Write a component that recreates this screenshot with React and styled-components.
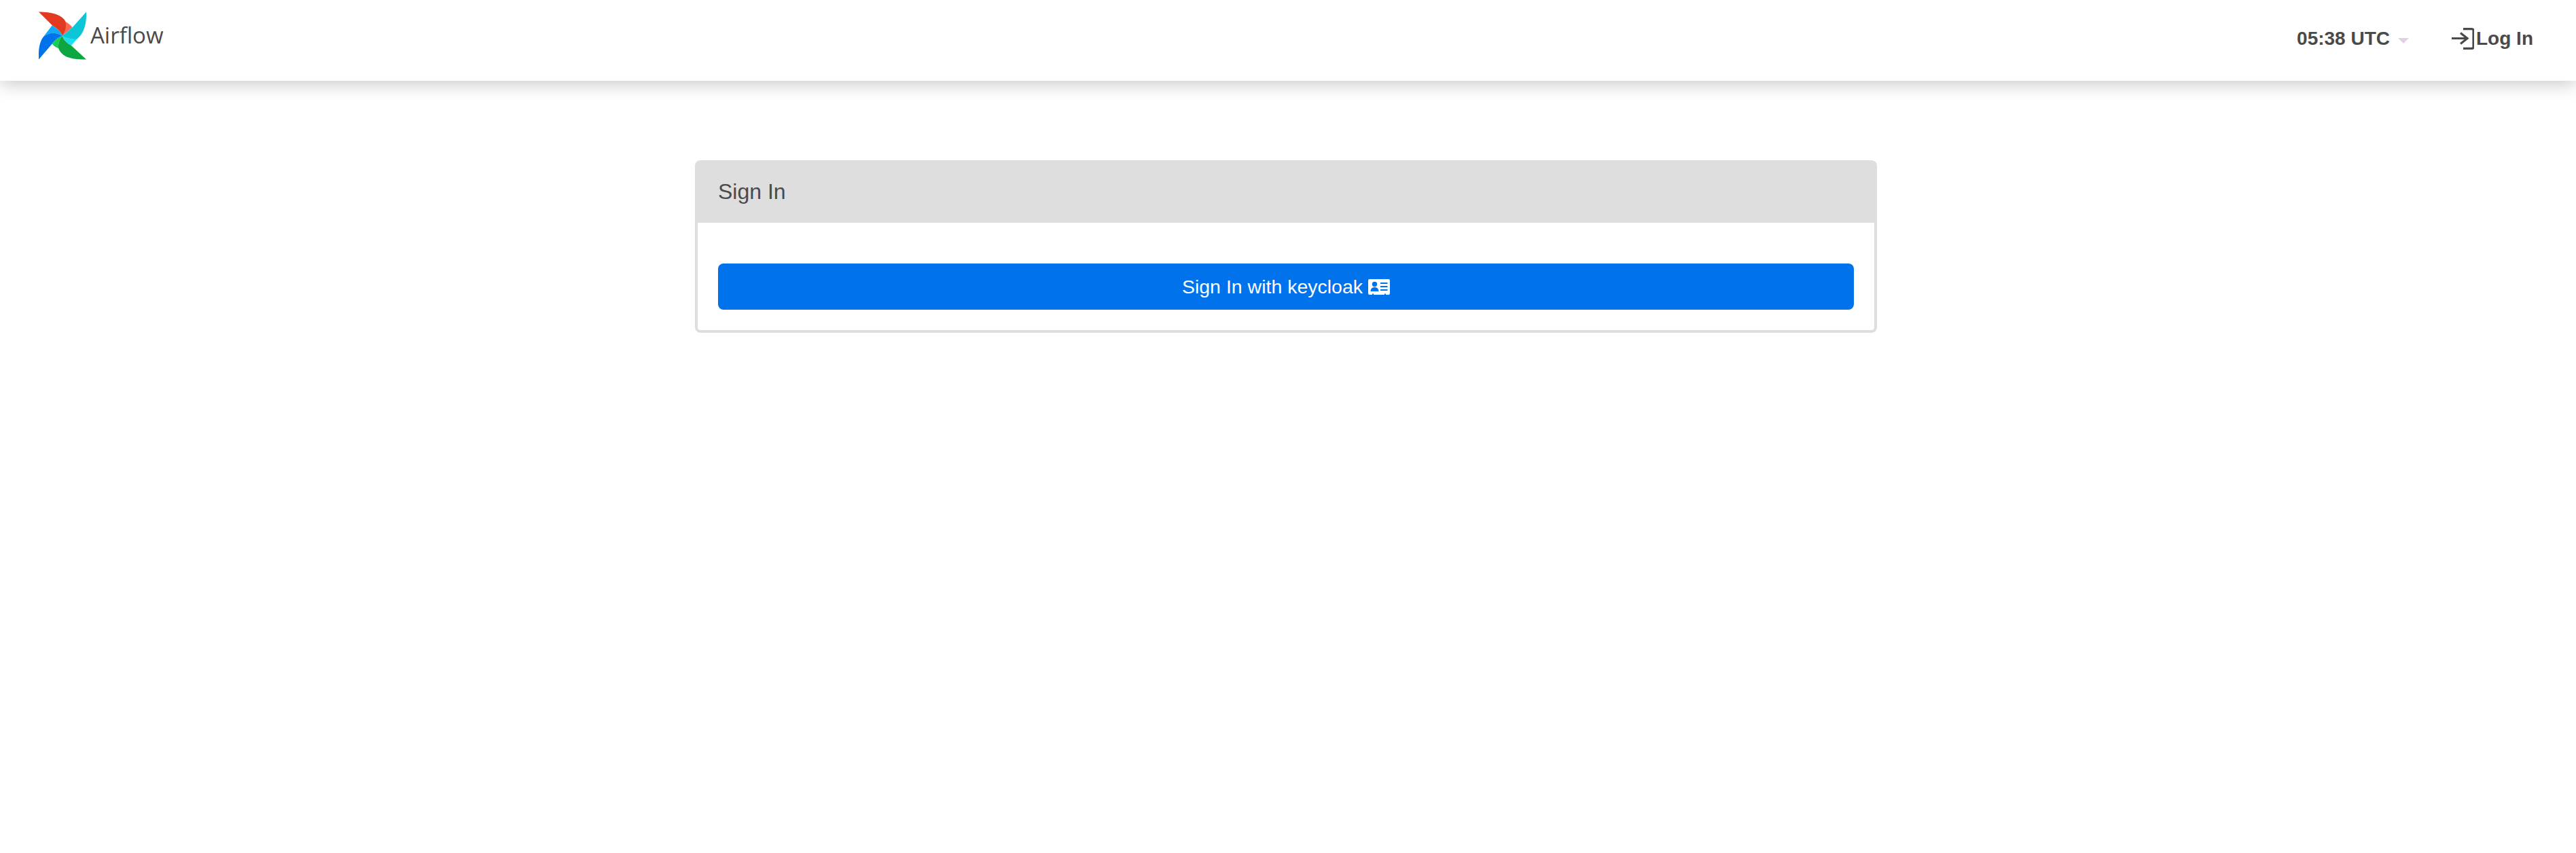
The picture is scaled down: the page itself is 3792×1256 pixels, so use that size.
import React from 'react';
import styled, { createGlobalStyle } from 'styled-components';

const GlobalStyle = createGlobalStyle`
  html, body {
    margin: 0;
    padding: 0;
    background: #fff;
    font-family: "Liberation Sans", Arial, sans-serif;
    color: #4a4a4a;
  }
`;

const Page = styled.div`
  min-height: 1256px;
  background: #fff;
`;

const Navbar = styled.nav`
  height: 119px;
  box-sizing: border-box;
  display: flex;
  align-items: center;
  justify-content: space-between;
  padding: 0 63px 0 57px;
  background: #fff;
  box-shadow: 0 6px 24px rgba(0, 0, 0, 0.2);
`;

const Brand = styled.a`
  display: flex;
  align-items: center;
  gap: 6px;
  margin-top: -15px;
  text-decoration: none;
`;

const BrandName = styled.span`
  font-family: "Open Sans", sans-serif;
  font-size: 33px;
  line-height: 44px;
  color: #4a4a4a;
`;

const NavRight = styled.div`
  display: flex;
  align-items: center;
  margin-top: -6px;
`;

const Clock = styled.button`
  display: flex;
  align-items: center;
  gap: 12px;
  padding: 0;
  border: 0;
  background: none;
  font: bold 28px "Liberation Sans", Arial, sans-serif;
  color: #4a4a4a;
`;

const Caret = styled.span`
  width: 0;
  height: 0;
  margin-top: 6px;
  border-left: 8px solid transparent;
  border-right: 8px solid transparent;
  border-top: 8px solid #e0d1e2;
`;

const LoginLink = styled.a`
  display: flex;
  align-items: center;
  gap: 3px;
  margin-left: 63px;
  font-size: 28px;
  font-weight: bold;
  color: #4a4a4a;
`;

const Main = styled.main`
  display: flex;
  justify-content: center;
  padding: 117px 6px 0 0;
`;

const Panel = styled.section`
  width: 1740px;
  box-sizing: border-box;
  border: 4px solid #dedede;
  border-radius: 8px;
  background: #fff;
`;

const PanelHeading = styled.h3`
  margin: 0;
  height: 88px;
  box-sizing: border-box;
  padding: 0 30px 3px;
  display: flex;
  align-items: center;
  background: #dedede;
  font-size: 32px;
  font-weight: normal;
  color: #4a4a4a;
`;

const PanelBody = styled.div`
  padding: 60px 30px 30px;
`;

const SignInButton = styled.button`
  width: 100%;
  height: 68px;
  display: flex;
  align-items: center;
  justify-content: center;
  gap: 8px;
  border: 0;
  border-radius: 8px;
  background: #0073ec;
  color: #fff;
  font: 28.500px "Liberation Sans", Arial, sans-serif;
`;

const PinLogo = () => (
  <svg width="70" height="71" viewBox="20 18 212 212" aria-hidden="true">
    <path fill="#ff6b50" d="M140 62C152 68 164 78 170 88L125 125Z" />
    <path fill="#e43921" d="M20 18C75 18 125 30 140 62C144 85 138 108 125 125C120 105 100 92 80 78Z" />
    <path fill="#19e1f2" d="M125 125C145 135 170 142 190 140L165 168C148 160 132 145 125 125Z" />
    <path fill="#0cc5d6" d="M232 18C234 70 222 115 190 140C168 142 145 137 125 125L170 88Z" />
    <path fill="#14cf56" d="M125 125C112 140 106 160 108 180C96 176 87 170 80 160C90 146 106 132 125 125Z" />
    <path fill="#0da741" d="M232 230C175 230 125 225 108 180C106 160 112 140 125 125C132 145 148 160 165 168Z" />
    <path fill="#11a8fb" d="M42 128L80 78C100 92 120 105 125 125C105 112 70 105 42 128Z" />
    <path fill="#0073ec" d="M20 230C18 185 24 150 42 128C70 105 105 112 125 125C106 132 90 146 80 160Z" />
  </svg>
);

const LoginIcon = () => (
  <svg width="33" height="32" viewBox="0 0 33 32" fill="none" stroke="#4a4a4a" strokeWidth="3.2" aria-hidden="true">
    <path d="M17 1.600h12.500a2.500 2.500 0 0 1 2.500 2.500v23.800a2.500 2.500 0 0 1-2.500 2.500H17" />
    <path d="M0 15.500h23M13 7.500l10 8-10 8" />
  </svg>
);

const IdCardIcon = () => (
  <svg width="32" height="23" viewBox="0 0 32 23" aria-hidden="true">
    <path
      fill="#fff"
      d="M2 0h28a2 2 0 0 1 2 2v19a2 2 0 0 1-2 2h-4v-1.500h-2V23H8v-1.500H6V23H2a2 2 0 0 1-2-2V2a2 2 0 0 1 2-2Z"
    />
    <circle cx="9.500" cy="7.500" r="3.700" fill="#0073ec" />
    <path fill="#0073ec" d="M3.500 18c0-4 2.500-6 6-6s6 2 6 6Z" />
    <path fill="#0073ec" d="M18 5h10.500v2H18zM18 10h10.500v2H18zM18 15h10.500v2H18z" />
  </svg>
);

function App() {
  return (
    <Page>
      <GlobalStyle />
      <Navbar>
        <Brand>
          <PinLogo />
          <BrandName>Airflow</BrandName>
        </Brand>
        <NavRight>
          <Clock>
            05:38 UTC
            <Caret />
          </Clock>
          <LoginLink>
            <LoginIcon />
            Log In
          </LoginLink>
        </NavRight>
      </Navbar>
      <Main>
        <Panel>
          <PanelHeading>Sign In</PanelHeading>
          <PanelBody>
            <SignInButton>
              Sign In with keycloak
              <IdCardIcon />
            </SignInButton>
          </PanelBody>
        </Panel>
      </Main>
    </Page>
  );
}

export default App;
